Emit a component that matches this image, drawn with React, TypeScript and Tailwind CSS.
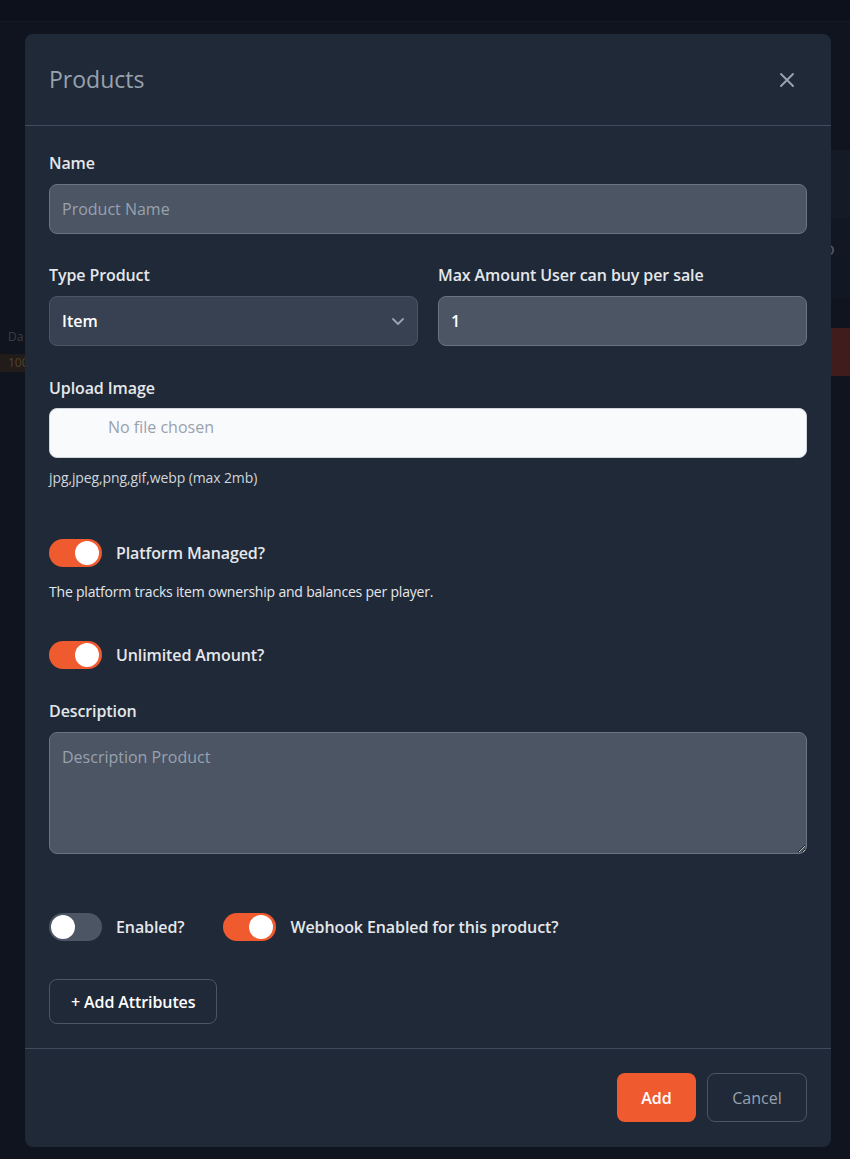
import React, { useState } from "react";

const font = { fontFamily: '"Open Sans", "Noto Sans", sans-serif' };

const Toggle = ({ on, onClick }: { on: boolean; onClick: () => void }) => (
  <button
    type="button"
    onClick={onClick}
    className={`relative flex items-center w-[53px] h-[28px] rounded-full shrink-0 ${
      on ? "bg-[#f05a2f] justify-end" : "bg-[#4b5563] justify-start"
    }`}
  >
    <span
      className={`block w-[24px] h-[24px] rounded-full bg-white ${
        on ? "mr-[3px]" : "ml-[2px]"
      }`}
    />
  </button>
);

const Label = ({ children }: { children: React.ReactNode }) => (
  <label className="block text-[16px] leading-6 font-semibold text-gray-200 tracking-[-0.1px]">
    {children}
  </label>
);

export default function App() {
  const [platform, setPlatform] = useState(true);
  const [unlimited, setUnlimited] = useState(true);
  const [enabled, setEnabled] = useState(false);
  const [webhook, setWebhook] = useState(true);

  return (
    <div className="relative w-full min-h-[1159px] bg-[#131a27] overflow-hidden" style={font}>
      {/* page behind the overlay */}
      <div className="flex flex-col opacity-60">
        <div className="h-[22px] bg-[#0f1522] border-b border-[#1e2636]" />
        <div className="flex justify-end mt-[128px]">
          <div className="w-[40px] h-[68px] bg-[#1f2837]" />
        </div>
        <div className="flex justify-end">
          <div className="w-[40px] h-[80px] bg-[#182030] pt-[20px] text-[15px] text-gray-400 font-semibold">
            TIO
          </div>
        </div>
        <div className="flex justify-between items-start mt-[30px]">
          <div className="w-[40px] text-[12px] text-gray-500 pl-[8px]">
            Da
            <div className="bg-[#3a2a1e] text-[#a07a3a] -ml-[8px] pl-[8px] mt-[8px]">100</div>
          </div>
          <div className="w-[40px] h-[48px] bg-[#7a2a22]" />
        </div>
      </div>

      {/* modal overlay */}
      <div className="absolute inset-0 bg-black/20 flex justify-start pl-[25px] pt-[34px]">
        <div className="w-[806px] h-[1113px] bg-[#1f2937] rounded-lg flex flex-col">
          <div className="h-[92px] shrink-0 flex items-center justify-between px-6 border-b border-[#3f4b5c]">
            <h2 className="text-[23px] font-medium text-gray-400">Products</h2>
            <button className="text-gray-400 mr-[12px]">
              <svg width="16" height="16" viewBox="0 0 16 16" fill="none" stroke="currentColor" strokeWidth="2" strokeLinecap="round">
                <path d="M2 2l12 12M14 2L2 14" />
              </svg>
            </button>
          </div>

          <div className="flex flex-col px-6 pt-[25px] pb-6 border-b border-[#3f4b5c]">
            <Label>Name</Label>
            <input
              placeholder="Product Name"
              className="mt-[9px] h-[50px] w-full rounded-lg bg-[#4b5563] border border-[#6b7280] px-3 text-[16px] font-medium text-white placeholder:text-gray-400 outline-none"
            />

            <div className="grid grid-cols-2 gap-5 mt-[29px]">
              <div>
                <Label>Type Product</Label>
                <div className="mt-[9px] h-[50px] rounded-lg bg-[#374151] border border-[#4b5563] px-3 flex items-center justify-between">
                  <span className="text-[16px] font-semibold text-white">Item</span>
                  <svg width="14" height="14" viewBox="0 0 14 14" fill="none" stroke="#9ca3af" strokeWidth="1.8" strokeLinecap="round" strokeLinejoin="round">
                    <path d="M2 5l5 5 5-5" />
                  </svg>
                </div>
              </div>
              <div>
                <Label>Max Amount User can buy per sale</Label>
                <div className="mt-[9px] h-[50px] rounded-lg bg-[#4b5563] border border-[#6b7280] px-3 flex items-center">
                  <span className="text-[16px] font-semibold text-white">1</span>
                </div>
              </div>
            </div>

            <div className="mt-[30px]">
              <Label>Upload Image</Label>
            </div>
            <div className="mt-[8px] h-[50px] rounded-lg bg-[#f9fafb] border border-[#d1d5db] pl-[58px] pt-[6px]">
              <span className="text-[16px] font-medium text-gray-400">No file chosen</span>
            </div>
            <p className="mt-[11px] text-[14px] leading-[18px] text-gray-300 tracking-[-0.1px]">
              jpg,jpeg,png,gif,webp (max 2mb)
            </p>

            <div className="mt-[52px] flex items-center gap-[14px]">
              <Toggle on={platform} onClick={() => setPlatform(!platform)} />
              <span className="text-[16px] font-semibold text-gray-200 tracking-[-0.1px]">Platform Managed?</span>
            </div>
            <p className="mt-[16px] text-[14px] leading-[18px] text-gray-200 tracking-[-0.2px]">
              The platform tracks item ownership and balances per player.
            </p>

            <div className="mt-[40px] flex items-center gap-[14px]">
              <Toggle on={unlimited} onClick={() => setUnlimited(!unlimited)} />
              <span className="text-[16px] font-semibold text-gray-200 tracking-[-0.1px]">Unlimited Amount?</span>
            </div>

            <div className="mt-[30px]">
              <Label>Description</Label>
            </div>
            <textarea
              placeholder="Description Product"
              className="mt-[9px] h-[122px] w-full rounded-lg bg-[#4b5563] border border-[#6b7280] px-3 py-[12px] text-[16px] font-medium text-white placeholder:text-gray-400 outline-none"
            />

            <div className="mt-[59px] flex items-center">
              <Toggle on={enabled} onClick={() => setEnabled(!enabled)} />
              <span className="ml-[14px] text-[16px] font-semibold text-gray-200 tracking-[-0.1px]">Enabled?</span>
              <div className="ml-[39px]">
                <Toggle on={webhook} onClick={() => setWebhook(!webhook)} />
              </div>
              <span className="ml-[14px] text-[16px] font-semibold text-gray-200 tracking-[-0.1px]">
                Webhook Enabled for this product?
              </span>
            </div>

            <div className="mt-[38px]">
              <button className="h-[45px] px-[21px] rounded-lg border border-[#4b5563] text-[16px] font-semibold text-white tracking-[-0.1px]">
                + Add Attributes
              </button>
            </div>
          </div>

          <div className="flex justify-end gap-[11px] px-6 pt-6">
            <button className="h-[49px] w-[79px] rounded-lg bg-[#f05a2f] text-[16px] font-semibold text-white">
              Add
            </button>
            <button className="h-[49px] w-[100px] rounded-lg border border-[#4b5563] text-[16px] font-medium text-gray-400">
              Cancel
            </button>
          </div>
        </div>
      </div>
    </div>
  );
}
